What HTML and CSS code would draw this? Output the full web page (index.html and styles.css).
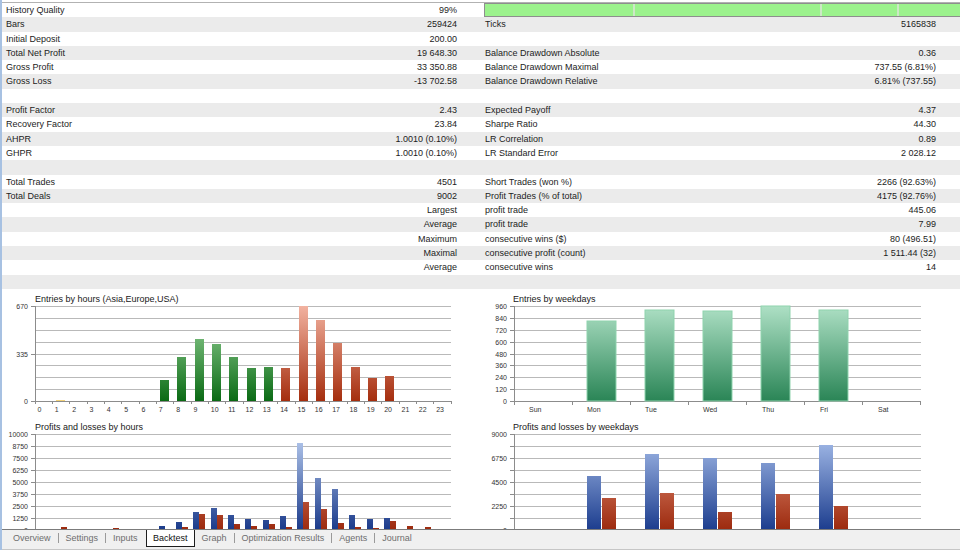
FILE: index.html
```html
<!DOCTYPE html>
<html lang="en">
<head>
<meta charset="utf-8">
<title>Backtest</title>
<link rel="stylesheet" href="styles.css">
</head>
<body>
<div class="app">
  <div class="stats">
    <div class="row"><div class="half left"><span>History Quality</span><span>99%</span></div><div class="half right progress-cell"><div class="progress"><span class="seg seg1"></span><span class="seg seg2"></span><span class="seg seg3"></span><span class="seg seg4"></span></div></div></div>
    <div class="row"><div class="half left"><span>Bars</span><span>259424</span></div><div class="half right"><span>Ticks</span><span>5165838</span></div></div>
    <div class="row"><div class="half left"><span>Initial Deposit</span><span>200.00</span></div><div class="half right"><span></span><span></span></div></div>
    <div class="row"><div class="half left"><span>Total Net Profit</span><span>19 648.30</span></div><div class="half right"><span>Balance Drawdown Absolute</span><span>0.36</span></div></div>
    <div class="row"><div class="half left"><span>Gross Profit</span><span>33 350.88</span></div><div class="half right"><span>Balance Drawdown Maximal</span><span>737.55 (6.81%)</span></div></div>
    <div class="row"><div class="half left"><span>Gross Loss</span><span>-13 702.58</span></div><div class="half right"><span>Balance Drawdown Relative</span><span>6.81% (737.55)</span></div></div>
    <div class="row"><div class="half left"></div><div class="half right"></div></div>
    <div class="row"><div class="half left"><span>Profit Factor</span><span>2.43</span></div><div class="half right"><span>Expected Payoff</span><span>4.37</span></div></div>
    <div class="row"><div class="half left"><span>Recovery Factor</span><span>23.84</span></div><div class="half right"><span>Sharpe Ratio</span><span>44.30</span></div></div>
    <div class="row"><div class="half left"><span>AHPR</span><span>1.0010 (0.10%)</span></div><div class="half right"><span>LR Correlation</span><span>0.89</span></div></div>
    <div class="row"><div class="half left"><span>GHPR</span><span>1.0010 (0.10%)</span></div><div class="half right"><span>LR Standard Error</span><span>2 028.12</span></div></div>
    <div class="row"><div class="half left"></div><div class="half right"></div></div>
    <div class="row"><div class="half left"><span>Total Trades</span><span>4501</span></div><div class="half right"><span>Short Trades (won %)</span><span>2266 (92.63%)</span></div></div>
    <div class="row"><div class="half left"><span>Total Deals</span><span>9002</span></div><div class="half right"><span>Profit Trades (% of total)</span><span>4175 (92.76%)</span></div></div>
    <div class="row"><div class="half left"><span></span><span>Largest</span></div><div class="half right"><span>profit trade</span><span>445.06</span></div></div>
    <div class="row"><div class="half left"><span></span><span>Average</span></div><div class="half right"><span>profit trade</span><span>7.99</span></div></div>
    <div class="row"><div class="half left"><span></span><span>Maximum</span></div><div class="half right"><span>consecutive wins ($)</span><span>80 (496.51)</span></div></div>
    <div class="row"><div class="half left"><span></span><span>Maximal</span></div><div class="half right"><span>consecutive profit (count)</span><span>1 511.44 (32)</span></div></div>
    <div class="row"><div class="half left"><span></span><span>Average</span></div><div class="half right"><span>consecutive wins</span><span>14</span></div></div>
    <div class="row"><div class="half left"></div><div class="half right"></div></div>
  </div>

  <div class="charts">
    <svg class="chart" width="478" height="240" viewBox="2 289 478 240">
      <defs>
        <linearGradient id="hGreen" gradientUnits="userSpaceOnUse" x1="0" y1="306" x2="0" y2="401"><stop offset="0" stop-color="#a2dba2"/><stop offset="1" stop-color="#0a6a14"/></linearGradient>
        <linearGradient id="hRed" gradientUnits="userSpaceOnUse" x1="0" y1="306" x2="0" y2="401"><stop offset="0" stop-color="#f2b2a0"/><stop offset="1" stop-color="#a52e0e"/></linearGradient>
        <linearGradient id="pBlue" gradientUnits="userSpaceOnUse" x1="0" y1="434" x2="0" y2="530"><stop offset="0" stop-color="#b9cdf0"/><stop offset="1" stop-color="#1a3a8a"/></linearGradient>
        <linearGradient id="pRed" gradientUnits="userSpaceOnUse" x1="0" y1="434" x2="0" y2="530"><stop offset="0" stop-color="#f0a088"/><stop offset="1" stop-color="#9c2a0e"/></linearGradient>
      </defs>
      <!-- Entries by hours -->
      <text class="ctitle" x="35" y="302">Entries by hours (Asia,Europe,USA)</text>
      <path class="grid" d="M35 306.5H451M35 318.5H451M35 330.5H451M35 342.5H451M35 354.5H451M35 365.5H451M35 377.5H451M35 389.5H451"/>
      <path class="axis" d="M35.5 306V401M35 401.5H452M31 306.5H35M31 354.5H35M31 401.5H35M35.5 401V404M52.5 401V404M69.5 401V404M87.5 401V404M104.5 401V404M121.5 401V404M139.5 401V404M156.5 401V404M173.5 401V404M191.5 401V404M208.5 401V404M225.5 401V404M243.5 401V404M260.5 401V404M277.5 401V404M295.5 401V404M312.5 401V404M329.5 401V404M347.5 401V404M364.5 401V404M381.5 401V404M399.5 401V404M416.5 401V404M433.5 401V404M451.5 401V404"/>
      <g class="ylab">
        <text x="28" y="308.5">670</text>
        <text x="28" y="356.5">335</text>
        <text x="28" y="403.5">0</text>
      </g>
      <g class="xlab">
        <text x="37.5" y="411.5">0</text><text x="54.8" y="411.5">1</text><text x="72.2" y="411.5">2</text><text x="89.5" y="411.5">3</text><text x="106.8" y="411.5">4</text><text x="124.2" y="411.5">5</text><text x="141.5" y="411.5">6</text><text x="158.8" y="411.5">7</text><text x="176.2" y="411.5">8</text><text x="193.5" y="411.5">9</text><text x="210.8" y="411.5">10</text><text x="228.2" y="411.5">11</text><text x="245.5" y="411.5">12</text><text x="262.8" y="411.5">13</text><text x="280.2" y="411.5">14</text><text x="297.5" y="411.5">15</text><text x="314.8" y="411.5">16</text><text x="332.2" y="411.5">17</text><text x="349.5" y="411.5">18</text><text x="366.8" y="411.5">19</text><text x="384.2" y="411.5">20</text><text x="401.5" y="411.5">21</text><text x="418.8" y="411.5">22</text><text x="436.2" y="411.5">23</text>
      </g>
      <rect x="56" y="400" width="9" height="1" fill="#f3d27a"/>
      <g fill="url(#hGreen)">
        <rect x="160" y="380" width="9" height="21"/>
        <rect x="177" y="357" width="9" height="44"/>
        <rect x="195" y="339" width="9" height="62"/>
        <rect x="212" y="344" width="9" height="57"/>
        <rect x="229" y="357" width="9" height="44"/>
        <rect x="247" y="368" width="9" height="33"/>
        <rect x="264" y="367" width="9" height="34"/>
      </g>
      <g fill="url(#hRed)">
        <rect x="281" y="368" width="9" height="33"/>
        <rect x="299" y="306" width="9" height="95"/>
        <rect x="316" y="320" width="9" height="81"/>
        <rect x="333" y="343" width="9" height="58"/>
        <rect x="351" y="367" width="9" height="34"/>
        <rect x="368" y="378" width="9" height="23"/>
        <rect x="385" y="376" width="9" height="25"/>
      </g>

      <!-- Profits and losses by hours -->
      <text class="ctitle" x="35" y="430">Profits and losses by hours</text>
      <path class="grid" d="M35 434.5H451M35 446.5H451M35 458.5H451M35 470.5H451M35 482.5H451M35 494.5H451M35 506.5H451M35 518.5H451"/>
      <path class="axis" d="M35.5 434V530M31 434.5H35M31 446.5H35M31 458.5H35M31 470.5H35M31 482.5H35M31 494.5H35M31 506.5H35M31 518.5H35"/>
      <g class="ylab">
        <text x="28" y="436.5">10000</text>
        <text x="28" y="448.5">8750</text>
        <text x="28" y="460.5">7500</text>
        <text x="28" y="472.5">6250</text>
        <text x="28" y="484.5">5000</text>
        <text x="28" y="496.5">3750</text>
        <text x="28" y="508.5">2500</text>
        <text x="28" y="520.5">1250</text>
        <text x="28" y="532.5">0</text>
      </g>
      <g fill="url(#pBlue)">
        <rect x="159" y="526" width="6" height="4"/>
        <rect x="176" y="522" width="6" height="8"/>
        <rect x="193" y="512" width="6" height="18"/>
        <rect x="211" y="508" width="6" height="22"/>
        <rect x="228" y="515" width="6" height="15"/>
        <rect x="245" y="519" width="6" height="11"/>
        <rect x="263" y="520" width="6" height="10"/>
        <rect x="280" y="516" width="6" height="14"/>
        <rect x="297" y="443" width="6" height="87"/>
        <rect x="315" y="478" width="6" height="52"/>
        <rect x="332" y="489" width="6" height="41"/>
        <rect x="349" y="515" width="6" height="15"/>
        <rect x="367" y="519" width="6" height="11"/>
        <rect x="384" y="518" width="6" height="12"/>
        <rect x="401" y="529" width="6" height="1"/>
      </g>
      <g fill="url(#pRed)">
        <rect x="61" y="527" width="6" height="3"/>
        <rect x="113" y="528" width="6" height="2"/>
        <rect x="182" y="527" width="6" height="3"/>
        <rect x="199" y="514" width="6" height="16"/>
        <rect x="217" y="515" width="6" height="15"/>
        <rect x="234" y="524" width="6" height="6"/>
        <rect x="251" y="526" width="6" height="4"/>
        <rect x="269" y="524" width="6" height="6"/>
        <rect x="286" y="527" width="6" height="3"/>
        <rect x="303" y="502" width="6" height="28"/>
        <rect x="321" y="509" width="6" height="21"/>
        <rect x="338" y="523" width="6" height="7"/>
        <rect x="355" y="527" width="6" height="3"/>
        <rect x="373" y="528" width="6" height="2"/>
        <rect x="390" y="521" width="6" height="9"/>
        <rect x="407" y="526" width="6" height="4"/>
        <rect x="425" y="527" width="6" height="3"/>
      </g>
    </svg>

    <svg class="chart" width="480" height="240" viewBox="480 289 480 240">
      <defs>
        <linearGradient id="wTeal" gradientUnits="userSpaceOnUse" x1="0" y1="306" x2="0" y2="401"><stop offset="0" stop-color="#aee0c5"/><stop offset="1" stop-color="#2a8556"/></linearGradient>
        <linearGradient id="wBlue" gradientUnits="userSpaceOnUse" x1="0" y1="434" x2="0" y2="530"><stop offset="0" stop-color="#a9c0ec"/><stop offset="1" stop-color="#1c3d8e"/></linearGradient>
        <linearGradient id="wRed" gradientUnits="userSpaceOnUse" x1="0" y1="434" x2="0" y2="530"><stop offset="0" stop-color="#f0a088"/><stop offset="1" stop-color="#9c2a0e"/></linearGradient>
      </defs>
      <!-- Entries by weekdays -->
      <text class="ctitle" x="513" y="302">Entries by weekdays</text>
      <path class="grid" d="M514 306.5H921M514 318.5H921M514 330.5H921M514 342.5H921M514 354.5H921M514 365.5H921M514 377.5H921M514 389.5H921"/>
      <path class="axis" d="M514.5 306V401M514 401.5H921M510 306.5H514M510 318.5H514M510 330.5H514M510 342.5H514M510 354.5H514M510 365.5H514M510 377.5H514M510 389.5H514M510 401.5H514M514.5 401V405M572.5 401V405M630.5 401V405M688.5 401V405M746.5 401V405M804.5 401V405M862.5 401V405M920.5 401V405"/>
      <g class="ylab">
        <text x="507" y="308.5">960</text>
        <text x="507" y="320.5">840</text>
        <text x="507" y="332.5">720</text>
        <text x="507" y="344.5">600</text>
        <text x="507" y="356.5">480</text>
        <text x="507" y="367.5">360</text>
        <text x="507" y="379.5">240</text>
        <text x="507" y="391.5">120</text>
        <text x="507" y="403.5">0</text>
      </g>
      <g class="xlab">
        <text x="529" y="411.5">Sun</text><text x="587" y="411.5">Mon</text><text x="645" y="411.5">Tue</text><text x="703" y="411.5">Wed</text><text x="762" y="411.5">Thu</text><text x="820" y="411.5">Fri</text><text x="878" y="411.5">Sat</text>
      </g>
      <g fill="url(#wTeal)" class="tealbar">
        <rect x="587" y="321" width="29" height="80"/>
        <rect x="645" y="310" width="29" height="91"/>
        <rect x="703" y="311" width="29" height="90"/>
        <rect x="761" y="306" width="29" height="95"/>
        <rect x="819" y="310" width="29" height="91"/>
      </g>

      <!-- Profits and losses by weekdays -->
      <text class="ctitle" x="513" y="430">Profits and losses by weekdays</text>
      <path class="grid" d="M514 434.5H921M514 446.5H921M514 458.5H921M514 470.5H921M514 482.5H921M514 494.5H921M514 506.5H921M514 518.5H921"/>
      <path class="axis" d="M514.5 434V530M510 434.5H514M510 446.5H514M510 458.5H514M510 470.5H514M510 482.5H514M510 494.5H514M510 506.5H514M510 518.5H514"/>
      <g class="ylab">
        <text x="507" y="436.5">9000</text>
        <text x="507" y="460.5">6750</text>
        <text x="507" y="484.5">4500</text>
        <text x="507" y="508.5">2250</text>
        <text x="507" y="532.5">0</text>
      </g>
      <g fill="url(#wBlue)">
        <rect x="587" y="476" width="14" height="54"/>
        <rect x="645" y="454" width="14" height="76"/>
        <rect x="703" y="458" width="14" height="72"/>
        <rect x="761" y="463" width="14" height="67"/>
        <rect x="819" y="445" width="14" height="85"/>
      </g>
      <g fill="url(#wRed)">
        <rect x="602" y="498" width="14" height="32"/>
        <rect x="660" y="493" width="14" height="37"/>
        <rect x="718" y="512" width="14" height="18"/>
        <rect x="776" y="494" width="14" height="36"/>
        <rect x="834" y="506" width="14" height="24"/>
      </g>
    </svg>
  </div>

  <div class="tabs">
    <span class="tab">Overview</span><span class="sep"></span>
    <span class="tab">Settings</span><span class="sep"></span>
    <span class="tab">Inputs</span>
    <span class="tab active">Backtest</span>
    <span class="tab">Graph</span><span class="sep"></span>
    <span class="tab">Optimization Results</span><span class="sep"></span>
    <span class="tab">Agents</span><span class="sep"></span>
    <span class="tab">Journal</span>
  </div>
</div>
</body>
</html>
```
FILE: styles.css
```css
html, body {
  margin: 0;
  padding: 0;
}

body {
  width: 960px;
  height: 550px;
  overflow: hidden;
  background: #ffffff;
  font-family: "Liberation Sans", Arial, sans-serif;
}

.app {
  height: 550px;
  box-sizing: border-box;
  border-left: 2px solid #a7c1e2;
  padding-top: 2px;
  display: flex;
  flex-direction: column;
  overflow: hidden;
}

.stats {
  flex: none;
  border-top: 1px solid #b2b2b2;
}

.row {
  display: flex;
  height: 14.3px;
  font-size: 9px;
  line-height: 14.3px;
  color: #1c1c1c;
}

.row:nth-child(even) {
  background: #ebebeb;
}

.half {
  display: flex;
  justify-content: space-between;
  white-space: nowrap;
  box-sizing: border-box;
}

.left {
  width: 478px;
  padding: 0 23px 0 4px;
}

.right {
  width: 480px;
  padding: 0 24px 0 5px;
}

.progress-cell {
  padding: 0 0 0 4px;
}

.progress {
  display: flex;
  width: 100%;
  height: 12px;
  border: 1px solid #8e8e8e;
  border-right: none;
  background: #9cf28d;
}

.seg {
  display: block;
  height: 100%;
  box-sizing: border-box;
  border-right: 2px solid #cde8c6;
}

.seg1 { width: 150px; }
.seg2 { width: 187px; }
.seg3 { width: 77px; }
.seg4 { flex: 1; border-right: none; }

.charts {
  flex: none;
  display: flex;
  height: 240px;
  background: #ffffff;
}

.chart {
  display: block;
  flex: none;
}

.ctitle {
  font-family: "Liberation Sans", Arial, sans-serif;
  font-size: 9px;
  fill: #202020;
}

.grid {
  stroke: #b9b9b9;
  stroke-width: 1;
  fill: none;
}

.axis {
  stroke: #8c8c8c;
  stroke-width: 1;
  fill: none;
}

.ylab text {
  font-family: "Liberation Sans", Arial, sans-serif;
  font-size: 7px;
  fill: #333333;
  text-anchor: end;
}

.xlab text {
  font-family: "Liberation Sans", Arial, sans-serif;
  font-size: 7px;
  fill: #333333;
}

.tealbar rect {
  stroke: #8fd3ae;
  stroke-width: 1;
}

.tabs {
  flex: none;
  height: 21px;
  box-sizing: border-box;
  border-top: 1px solid #7b7b7b;
  border-bottom: 1px solid #c6c6c6;
  background: #f0f0f0;
  display: flex;
  align-items: flex-start;
  padding-left: 4px;
  font-size: 9px;
}

.tab {
  height: 16px;
  line-height: 16px;
  padding: 0 7px;
  color: #6e6e6e;
  white-space: nowrap;
}

.tab.active {
  background: #ffffff;
  border: 1px solid #1e1e1e;
  border-top: none;
  color: #111111;
  padding: 0 6px;
  margin-left: 1.5px;
}

.sep {
  width: 1px;
  height: 10px;
  margin-top: 3px;
  background: #9a9a9a;
}
```
